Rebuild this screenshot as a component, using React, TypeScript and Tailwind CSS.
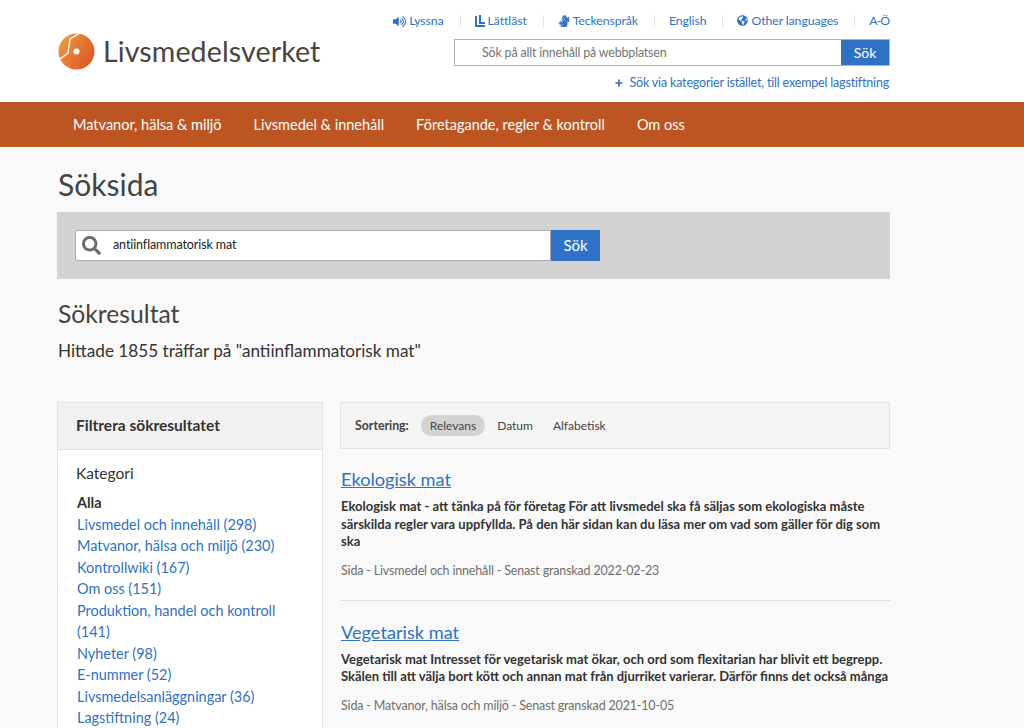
import { Plus } from "lucide-react";
import { FaVolumeUp, FaSignLanguage, FaGlobeAmericas, FaSearch } from "react-icons/fa";

const utilityLinks = [
  { label: "Lyssna", icon: "sound" },
  { label: "Lättläst", icon: "easy" },
  { label: "Teckenspråk", icon: "hand" },
  { label: "English", icon: "" },
  { label: "Other languages", icon: "globe" },
  { label: "A-Ö", icon: "" },
];

const navLinks = [
  "Matvanor, hälsa & miljö",
  "Livsmedel & innehåll",
  "Företagande, regler & kontroll",
  "Om oss",
];

const categories = [
  "Livsmedel och innehåll (298)",
  "Matvanor, hälsa och miljö (230)",
  "Kontrollwiki (167)",
  "Om oss (151)",
  "Produktion, handel och kontroll (141)",
  "Nyheter (98)",
  "E-nummer (52)",
  "Livsmedelsanläggningar (36)",
  "Lagstiftning (24)",
];

const Logo = () => (
  <div className="flex items-center gap-[8px]">
    <svg width="37" height="37" viewBox="0 0 37 37">
      <defs>
        <linearGradient id="logoFill" x1="0" y1="0" x2="1" y2="0.6">
          <stop offset="0" stopColor="#f0a040" />
          <stop offset="1" stopColor="#dd5a2a" />
        </linearGradient>
      </defs>
      <circle cx="18.5" cy="18.5" r="18" fill="url(#logoFill)" />
      <circle cx="18.5" cy="18.5" r="3" fill="#fff" />
      <path d="M22 0 L12 6 L10 20 L2 26" fill="none" stroke="#fff" strokeWidth="1.4" />
    </svg>
    <span className="font-['Lato',sans-serif] text-[28.6px] leading-none tracking-[0.1px] text-[#4a4340]">
      Livsmedelsverket
    </span>
  </div>
);

const UtilityIcon = ({ name }: { name: string }) => {
  if (name === "sound") return <FaVolumeUp size={13} />;
  if (name === "globe") return <FaGlobeAmericas size={11} />;
  if (name === "easy")
    return (
      <svg width="10" height="12" viewBox="0 0 10 12" fill="#2f71c4">
        <path d="M0 1h2v9h8v2H0zM4 0h2v7h4v2H4z" />
      </svg>
    );
  if (name === "hand") return <FaSignLanguage size={12} />;
  return null;
};

const Result = ({
  title,
  body,
  meta,
  first,
  last,
}: {
  title: string;
  body: string[];
  meta: string;
  first?: boolean;
  last?: boolean;
}) => (
  <article className={`${first ? "pt-[16px]" : "pt-[17px]"} ${last ? "" : "pb-[20px] border-b border-[#dcdcdc]"}`}>
    <h3 className="pl-px text-[18.2px] leading-[28px] text-[#2f71c4] underline">{title}</h3>
    <p className="mt-[5px] pl-px text-[13px] font-bold leading-[17.5px] text-[#333]">
      {body.map((line) => (
        <span key={line} className="block whitespace-nowrap">
          {line}
        </span>
      ))}
    </p>
    <p className="mt-[11px] pl-px text-[12.5px] leading-[18px] tracking-[-0.17px] text-[#6f6f6f]">{meta}</p>
  </article>
);

const App = () => {
  return (
    <div className="h-[728px] overflow-hidden bg-[#f9f9f9] font-['Lato',sans-serif] text-[#333]">
      <header className="h-[102px] bg-white">
        <div className="mx-[58px] flex w-[832px] justify-between">
          <div className="pt-[33px]">
            <Logo />
          </div>
          <div className="flex flex-col items-end pt-[13px]">
            <ul className="mr-px flex h-[16px] items-center text-[12.3px] leading-none tracking-[-0.1px] text-[#2f71c4]">
              {utilityLinks.map((l, i) => (
                <li
                  key={l.label}
                  className={`flex items-center gap-[3px] ${i ? "ml-[16px] border-l border-[#e4e4e4] pl-[14px]" : ""} ${l.label === "A-Ö" ? "tracking-[-1px]" : ""}`}
                >
                  <UtilityIcon name={l.icon} />
                  {l.label}
                </li>
              ))}
            </ul>
            <form className="mt-[10px] flex h-[27px] w-[436px] border border-[#b2b2b2]">
              <div className="flex-1 pl-[27px] text-[12.5px] leading-[25px] tracking-[-0.2px] text-[#757575]">
                Sök på allt innehåll på webbplatsen
              </div>
              <button className="w-[48px] bg-[#2f71c4] text-[14px] text-white">Sök</button>
            </form>
            <a className="mr-px mt-[9px] flex items-center gap-[5px] text-[12.5px] leading-[16px] tracking-[-0.18px] text-[#2f71c4]">
              <Plus size={10} strokeWidth={4} />
              Sök via kategorier istället, till exempel lagstiftning
            </a>
          </div>
        </div>
      </header>

      <nav className="flex h-[45px] items-center gap-[32px] bg-[#bd5523] pl-[73px] text-[14.5px] text-white">
        {navLinks.map((n) => (
          <span key={n}>{n}</span>
        ))}
      </nav>

      <main className="mx-[57px] w-[833px]">
        <h1 className="pl-px pt-[17px] text-[30px] leading-[40px] text-[#444]">Söksida</h1>
        <div className="mt-[8px] flex h-[67px] items-center bg-[#d3d3d3] px-[18px]">
          <div className="flex h-[31px] w-[476px] items-center rounded-l-[2px] border border-[#a9a9b5] bg-white pl-[6px]">
            <FaSearch size={19} className="text-[#6c6c6c]" />
            <span className="ml-[12px] text-[12.5px] tracking-[-0.1px] text-[#222]">antiinflammatorisk mat</span>
          </div>
          <button className="h-[31px] w-[49px] bg-[#2f71c4] text-[15px] text-white">Sök</button>
        </div>

        <h2 className="mt-[18px] pl-px text-[24.7px] leading-[34px] text-[#444]">Sökresultat</h2>
        <p className="mt-[8px] pl-px text-[17.15px] leading-[24px] text-[#333]">
          Hittade 1855 träffar på "antiinflammatorisk mat"
        </p>

        <div className="mt-[39px] flex gap-[17px]">
          <aside className="w-[266px] shrink-0 border border-[#e2e2e2] bg-white">
            <h2 className="flex h-[47px] items-center border-b border-[#e2e2e2] bg-[#f1f1f1] pl-[18px] text-[15.5px] font-bold text-[#333]">
              Filtrera sökresultatet
            </h2>
            <div className="px-[18px] pt-[12px]">
              <h3 className="text-[15.5px] leading-[22px] text-[#333]">Kategori</h3>
              <ul className="mt-[8px] pl-px text-[14.45px] leading-[21.5px] text-[#2f71c4]">
                <li className="font-bold text-[#333]">Alla</li>
                {categories.map((c) => (
                  <li key={c}>{c}</li>
                ))}
              </ul>
            </div>
          </aside>

          <section className="w-[550px] min-w-0">
            <div className="flex h-[47px] items-center border border-[#e2e2e2] bg-[#f4f4f4] pl-[14px] text-[12px] leading-[15px] text-[#444]">
              <span className="text-[12.3px] font-bold">Sortering:</span>
              <span className="ml-[12px] rounded-full bg-[#d3d3d3] px-[9px] py-[3px]">Relevans</span>
              <span className="ml-[12px]">Datum</span>
              <span className="ml-[20px]">Alfabetisk</span>
            </div>
            <Result
              first
              title="Ekologisk mat"
              body={[
                "Ekologisk mat - att tänka på för företag För att livsmedel ska få säljas som ekologiska måste",
                "särskilda regler vara uppfyllda. På den här sidan kan du läsa mer om vad som gäller för dig som",
                "ska",
              ]}
              meta="Sida - Livsmedel och innehåll - Senast granskad 2022-02-23"
            />
            <Result
              last
              title="Vegetarisk mat"
              body={[
                "Vegetarisk mat Intresset för vegetarisk mat ökar, och ord som flexitarian har blivit ett begrepp.",
                "Skälen till att välja bort kött och annan mat från djurriket varierar. Därför finns det också många",
              ]}
              meta="Sida - Matvanor, hälsa och miljö - Senast granskad 2021-10-05"
            />
          </section>
        </div>
      </main>
    </div>
  );
};

export default App;
